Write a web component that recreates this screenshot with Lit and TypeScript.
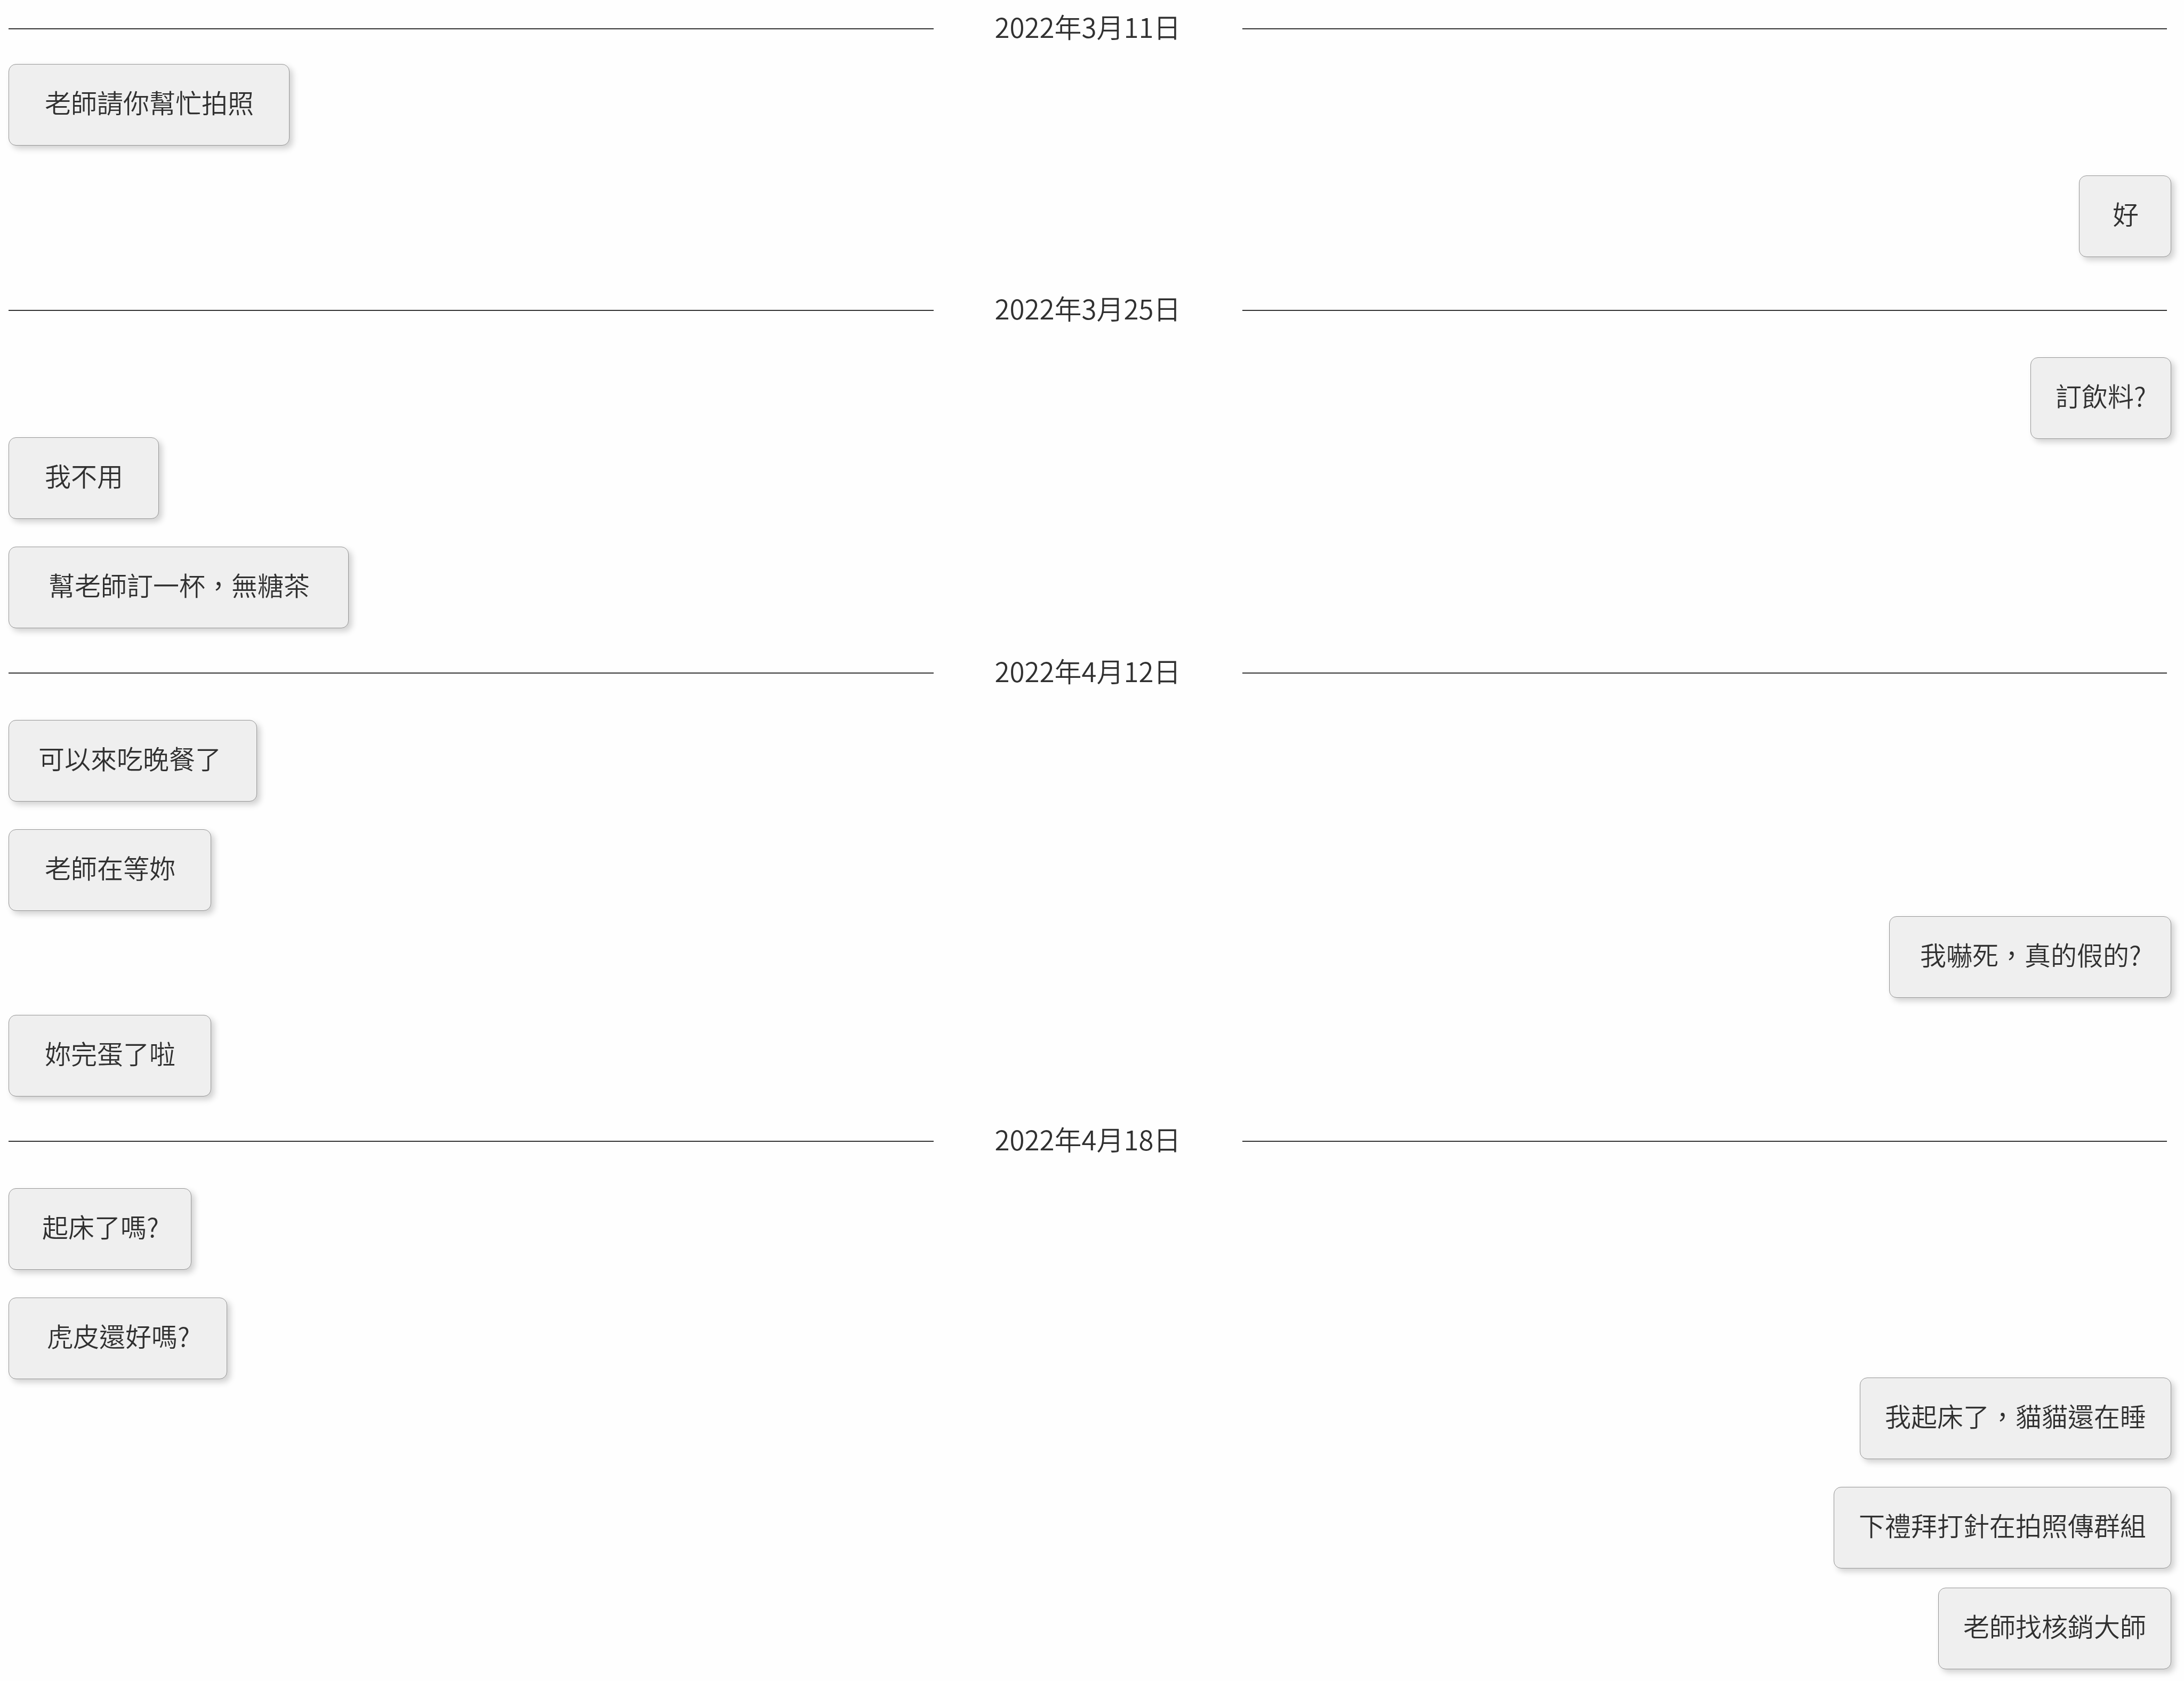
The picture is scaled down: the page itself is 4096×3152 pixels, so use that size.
import { LitElement, html, css } from "lit";
import { customElement, property } from "lit/decorators.js";

type Side = "left" | "right";
type Gap = "overlap" | "near" | "mid" | "loose" | "far" | "opening";
type Pad = "xs" | "sm" | "ragged" | "md" | "lg" | "xl" | "xxl";

interface Message {
  text: string;
  side: Side;
  gap: Gap;
  pad: Pad;
}

interface Day {
  date: string;
  iso: string;
  spacing: "first" | "wide" | "normal";
  messages: Message[];
}

const DAYS: Day[] = [
  {
    date: "2022年3月11日",
    iso: "2022-03-11",
    spacing: "first",
    messages: [
      { text: "老師請你幫忙拍照", side: "left", gap: "opening", pad: "lg" },
      { text: "好", side: "right", gap: "far", pad: "md" },
    ],
  },
  {
    date: "2022年3月25日",
    iso: "2022-03-25",
    spacing: "wide",
    messages: [
      { text: "訂飲料?", side: "right", gap: "opening", pad: "xs" },
      { text: "我不用", side: "left", gap: "overlap", pad: "lg" },
      { text: "幫老師訂一杯，無糖茶", side: "left", gap: "far", pad: "xxl" },
    ],
  },
  {
    date: "2022年4月12日",
    iso: "2022-04-12",
    spacing: "normal",
    messages: [
      { text: "可以來吃晚餐了", side: "left", gap: "opening", pad: "ragged" },
      { text: "老師在等妳", side: "left", gap: "far", pad: "lg" },
      { text: "我嚇死，真的假的?", side: "right", gap: "near", pad: "sm" },
      { text: "妳完蛋了啦", side: "left", gap: "mid", pad: "lg" },
    ],
  },
  {
    date: "2022年4月18日",
    iso: "2022-04-18",
    spacing: "normal",
    messages: [
      { text: "起床了嗎?", side: "left", gap: "opening", pad: "md" },
      { text: "虎皮還好嗎?", side: "left", gap: "far", pad: "xl" },
      { text: "我起床了，貓貓還在睡", side: "right", gap: "overlap", pad: "xs" },
      { text: "下禮拜打針在拍照傳群組", side: "right", gap: "far", pad: "xs" },
      { text: "老師找核銷大師", side: "right", gap: "loose", pad: "xs" },
    ],
  },
];

@customElement("day-divider")
export class DayDivider extends LitElement {
  @property() label = "";
  @property() iso = "";

  static styles = css`
    :host {
      display: block;
    }
    .divider {
      display: flex;
      align-items: center;
      height: 66px;
      margin: 0;
      padding-right: 8px;
      font: inherit;
    }
    .rule {
      flex: 1;
      height: 2px;
      background: #333;
    }
    .label {
      padding: 0 115px 10px;
      font-size: 51px;
      line-height: 56px;
      white-space: nowrap;
    }
  `;

  render() {
    return html`
      <h2 class="divider">
        <span class="rule"></span>
        <time class="label" datetime=${this.iso}>${this.label}</time>
        <span class="rule"></span>
      </h2>
    `;
  }
}

@customElement("chat-bubble")
export class ChatBubble extends LitElement {
  @property() text = "";
  @property() pad: Pad = "md";

  static styles = css`
    :host {
      display: block;
    }
    .bubble {
      box-sizing: border-box;
      margin: 0;
      padding-top: 40px;
      padding-bottom: 51px;
      border: 1px solid #969696;
      border-radius: 14px;
      background: #efefef;
      box-shadow: 6px 6px 12px rgba(0, 0, 0, 0.18);
      font-size: 49px;
      line-height: 60px;
      white-space: nowrap;
    }
    .xs {
      padding-left: 46px;
      padding-right: 46px;
    }
    .sm {
      padding-left: 57px;
      padding-right: 55px;
    }
    .ragged {
      padding-left: 55px;
      padding-right: 66px;
    }
    .md {
      padding-left: 62px;
      padding-right: 60px;
    }
    .lg {
      padding-left: 67px;
      padding-right: 66px;
    }
    .xl {
      padding-left: 71px;
      padding-right: 69px;
    }
    .xxl {
      padding-left: 74px;
      padding-right: 72px;
    }
  `;

  render() {
    return html`<p class="bubble ${this.pad}">${this.text}</p>`;
  }
}

@customElement("app-root")
export class AppRoot extends LitElement {
  static styles = css`
    :host {
      display: block;
      background: #fefefe;
      color: #303030;
      font-family: "Noto Sans CJK TC", sans-serif;
      font-weight: 350;
    }
    .chat {
      display: flex;
      flex-direction: column;
      padding: 21px 24px 22px 16px;
    }
    .wide {
      margin-top: 67px;
    }
    .normal {
      margin-top: 51px;
    }
    .messages {
      display: flex;
      flex-direction: column;
      margin: 0;
      padding: 0;
      list-style: none;
    }
    .left {
      align-self: flex-start;
    }
    .right {
      align-self: flex-end;
    }
    .opening {
      margin-top: 55px;
    }
    .first .opening {
      margin-top: 33px;
    }
    .overlap {
      margin-top: -3px;
    }
    .near {
      margin-top: 10px;
    }
    .mid {
      margin-top: 32px;
    }
    .loose {
      margin-top: 36px;
    }
    .far {
      margin-top: 52px;
    }
    .first .far {
      margin-top: 56px;
    }
  `;

  render() {
    return html`
      <main class="chat" lang="zh-Hant">
        ${DAYS.map(
          (day) => html`
            <section class=${day.spacing}>
              <day-divider .label=${day.date} .iso=${day.iso}></day-divider>
              <ol class="messages">
                ${day.messages.map(
                  (m) => html`
                    <li class="${m.side} ${m.gap}">
                      <chat-bubble .text=${m.text} .pad=${m.pad}></chat-bubble>
                    </li>
                  `
                )}
              </ol>
            </section>
          `
        )}
      </main>
    `;
  }
}
